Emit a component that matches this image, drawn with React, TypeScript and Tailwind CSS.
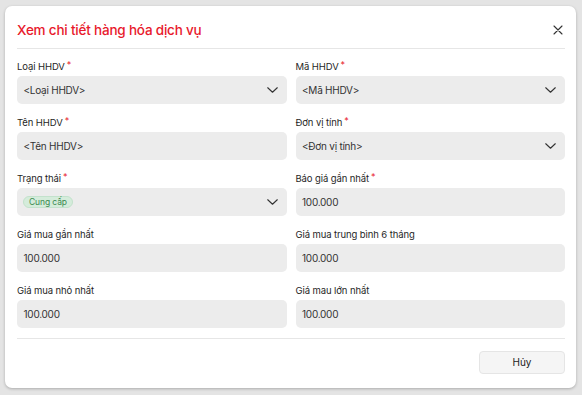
import React from "react";

const Chevron = () => (
  <svg width="11" height="6" viewBox="0 0 11 6" fill="none" className="shrink-0">
    <path d="M0.75 0.75l4.75 4.5 4.75-4.5" stroke="#333" strokeWidth="1.1" strokeLinecap="round" strokeLinejoin="round" />
  </svg>
);

const Label = ({ text, req }: { text: string; req?: boolean }) => (
  <div className="h-[14px] flex items-center text-[9.5px] leading-[14px] text-[#1f1f1f] tracking-[-0.1px]">
    <span>{text}</span>
    {req && <span className="text-[#e8192c] text-[9px] leading-none ml-[2px] -mt-[5px]">*</span>}
  </div>
);

const Field = ({
  label,
  req,
  value,
  select,
  badge,
}: {
  label: string;
  req?: boolean;
  value?: string;
  select?: boolean;
  badge?: boolean;
}) => (
  <div className="flex flex-col gap-[2px]">
    <Label text={label} req={req} />
    <div className="h-[28px] rounded-[5px] bg-[#ececec] flex items-center justify-between pl-[6px] pr-[9px]">
      {badge ? (
        <span className="h-[12px] px-[5px] rounded-full bg-[#d5ecdb] border border-[#c3e2cc] text-[#3b8a50] text-[8.5px] leading-none flex items-center tracking-[-0.1px]">
          Cung cấp
        </span>
      ) : (
        <span className="text-[10px] text-[#333] pl-[0.5px] tracking-[-0.25px]">{value}</span>
      )}
      {select && <Chevron />}
    </div>
  </div>
);

export default function App() {
  return (
    <div
      className="w-[582px] h-[395px] bg-[#e4e4e4] pt-[6px] pl-[5px]"
      style={{ fontFamily: "Inter, 'Noto Sans', sans-serif" }}
    >
      <div className="w-[571px] h-[382px] bg-white rounded-[7px] shadow-[0_1px_3px_rgba(0,0,0,0.25)] pl-[12px] pr-[11px] flex flex-col">
        <div className="h-[42px] flex items-center justify-between pt-[6px]">
          <h1 className="text-[13.5px] text-[#e8192c] leading-[20px] font-medium tracking-[-0.2px]">Xem chi tiết hàng hóa dịch vụ</h1>
          <svg width="10" height="10" viewBox="0 0 10 10" className="mr-[2px]">
            <path d="M1 1l8 8M9 1l-8 8" stroke="#333" strokeWidth="1.1" strokeLinecap="round" />
          </svg>
        </div>
        <div className="h-px bg-[#e6e6e6]" />
        <div className="grid grid-cols-2 gap-x-[9px] gap-y-[12px] pt-[11px]">
          <Field label="Loại HHDV" req value="<Loại HHDV>" select />
          <Field label="Mã HHDV" req value="<Mã HHDV>" select />
          <Field label="Tên HHDV" req value="<Tên HHDV>" />
          <Field label="Đơn vị tính" req value="<Đơn vị tính>" select />
          <Field label="Trạng thái" req badge select />
          <Field label="Báo giá gần nhất" req value="100.000" />
          <Field label="Giá mua gần nhất" value="100.000" />
          <Field label="Giá mua trung bình 6 tháng" value="100.000" />
          <Field label="Giá mua nhỏ nhất" value="100.000" />
          <Field label="Giá mau lớn nhất" value="100.000" />
        </div>
        <div className="h-px bg-[#e6e6e6] mt-[10px]" />
        <div className="flex justify-end pt-[12px]">
          <button className="w-[86px] h-[23px] rounded-[4px] bg-[#f5f5f5] border border-[#e5e5e5] text-[10px] text-[#222]">
            Hủy
          </button>
        </div>
      </div>
    </div>
  );
}
